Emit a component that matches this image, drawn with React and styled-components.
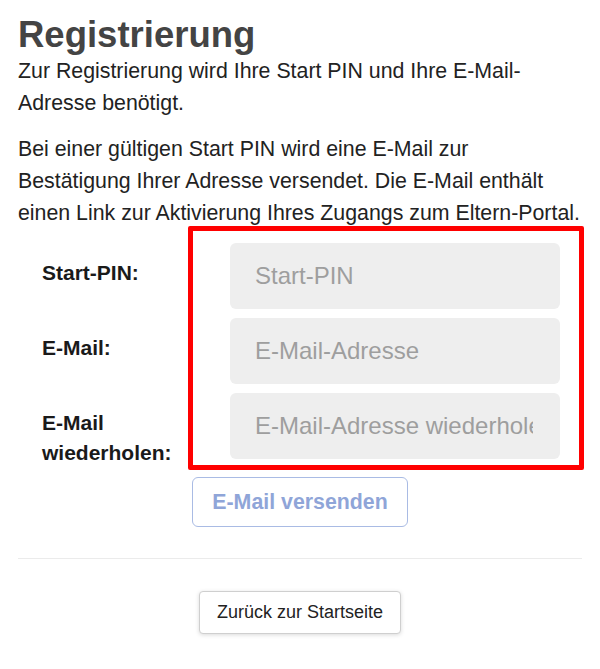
import React from 'react';
import styled, { createGlobalStyle } from 'styled-components';

const GlobalStyle = createGlobalStyle`
  html, body {
    margin: 0;
    padding: 0;
    background: #fff;
  }
  body {
    font-family: "Liberation Sans", Arial, sans-serif;
    color: #222;
  }
`;

const Page = styled.div`
  width: 600px;
  box-sizing: border-box;
  padding: 15px 18px 30px;
`;

const Title = styled.h1`
  margin: 0;
  font-size: 36.5px;
  line-height: 1.1;
  font-weight: bold;
  color: #444;
`;

const Text = styled.p`
  margin: 0 0 14px;
  font-size: 21.33px;
  line-height: 32px;
  color: #222;
`;

const Form = styled.div`
  position: relative;
  margin-top: 10px;
  padding-left: 24px;
  display: grid;
  grid-template-columns: 188px 330px;
  row-gap: 9px;
`;

const Frame = styled.div`
  position: absolute;
  left: 170px;
  top: -17px;
  width: 396px;
  height: 244px;
  box-sizing: border-box;
  border: 5px solid #ff0000;
  border-radius: 2px;
  pointer-events: none;
`;

const Label = styled.label`
  padding-top: 15px;
  font-size: 21px;
  line-height: 30px;
  font-weight: bold;
  color: #1a1a1a;
`;

const Input = styled.input`
  height: 66px;
  box-sizing: border-box;
  width: 100%;
  padding: 0 27px 0 25px;
  border: none;
  border-radius: 6px;
  background: #eeeeee;
  font-family: inherit;
  font-size: 24px;
  color: #333;
  outline: none;

  &::placeholder {
    color: #9e9e9e;
  }
`;

const Center = styled.div`
  display: flex;
  justify-content: center;
  margin-top: ${(p) => p.$top || 0}px;
`;

const SendButton = styled.button`
  padding: 8px 19px;
  border: 1.5px solid #a9bbe4;
  border-radius: 6px;
  background: #fff;
  font-family: inherit;
  font-size: 21.33px;
  line-height: 32px;
  font-weight: bold;
  color: #8fa5d8;
`;

const Divider = styled.hr`
  margin: 31px 0 0;
  border: none;
  border-top: 1.5px solid #ebebeb;
`;

const BackButton = styled.button`
  padding: 7px 17px;
  border: 1px solid #cfcfcf;
  border-radius: 4px;
  background: #fff;
  box-shadow: 0 1px 4px rgba(0, 0, 0, 0.15);
  font-family: inherit;
  font-size: 18px;
  line-height: 27px;
  color: #222;
`;

const fields = [
  { id: 'pin', label: 'Start-PIN:', placeholder: 'Start-PIN' },
  { id: 'mail', label: 'E-Mail:', placeholder: 'E-Mail-Adresse' },
  { id: 'mail2', label: 'E-Mail wiederholen:', placeholder: 'E-Mail-Adresse wiederholen' },
];

const App = () => (
  <Page>
    <GlobalStyle />
    <Title>Registrierung</Title>
    <Text>Zur Registrierung wird Ihre Start PIN und Ihre E-Mail-Adresse benötigt.</Text>
    <Text>
      Bei einer gültigen Start PIN wird eine E-Mail zur Bestätigung Ihrer Adresse versendet. Die
      E-Mail enthält einen Link zur Aktivierung Ihres Zugangs zum Eltern-Portal.
    </Text>
    <Form>
      <Frame />
      {fields.map((f) => (
        <React.Fragment key={f.id}>
          <Label htmlFor={f.id}>{f.label}</Label>
          <Input id={f.id} placeholder={f.placeholder} />
        </React.Fragment>
      ))}
    </Form>
    <Center $top={9}>
      <SendButton disabled>E-Mail versenden</SendButton>
    </Center>
    <Divider />
    <Center $top={32}>
      <BackButton>Zurück zur Startseite</BackButton>
    </Center>
  </Page>
);

export default App;
